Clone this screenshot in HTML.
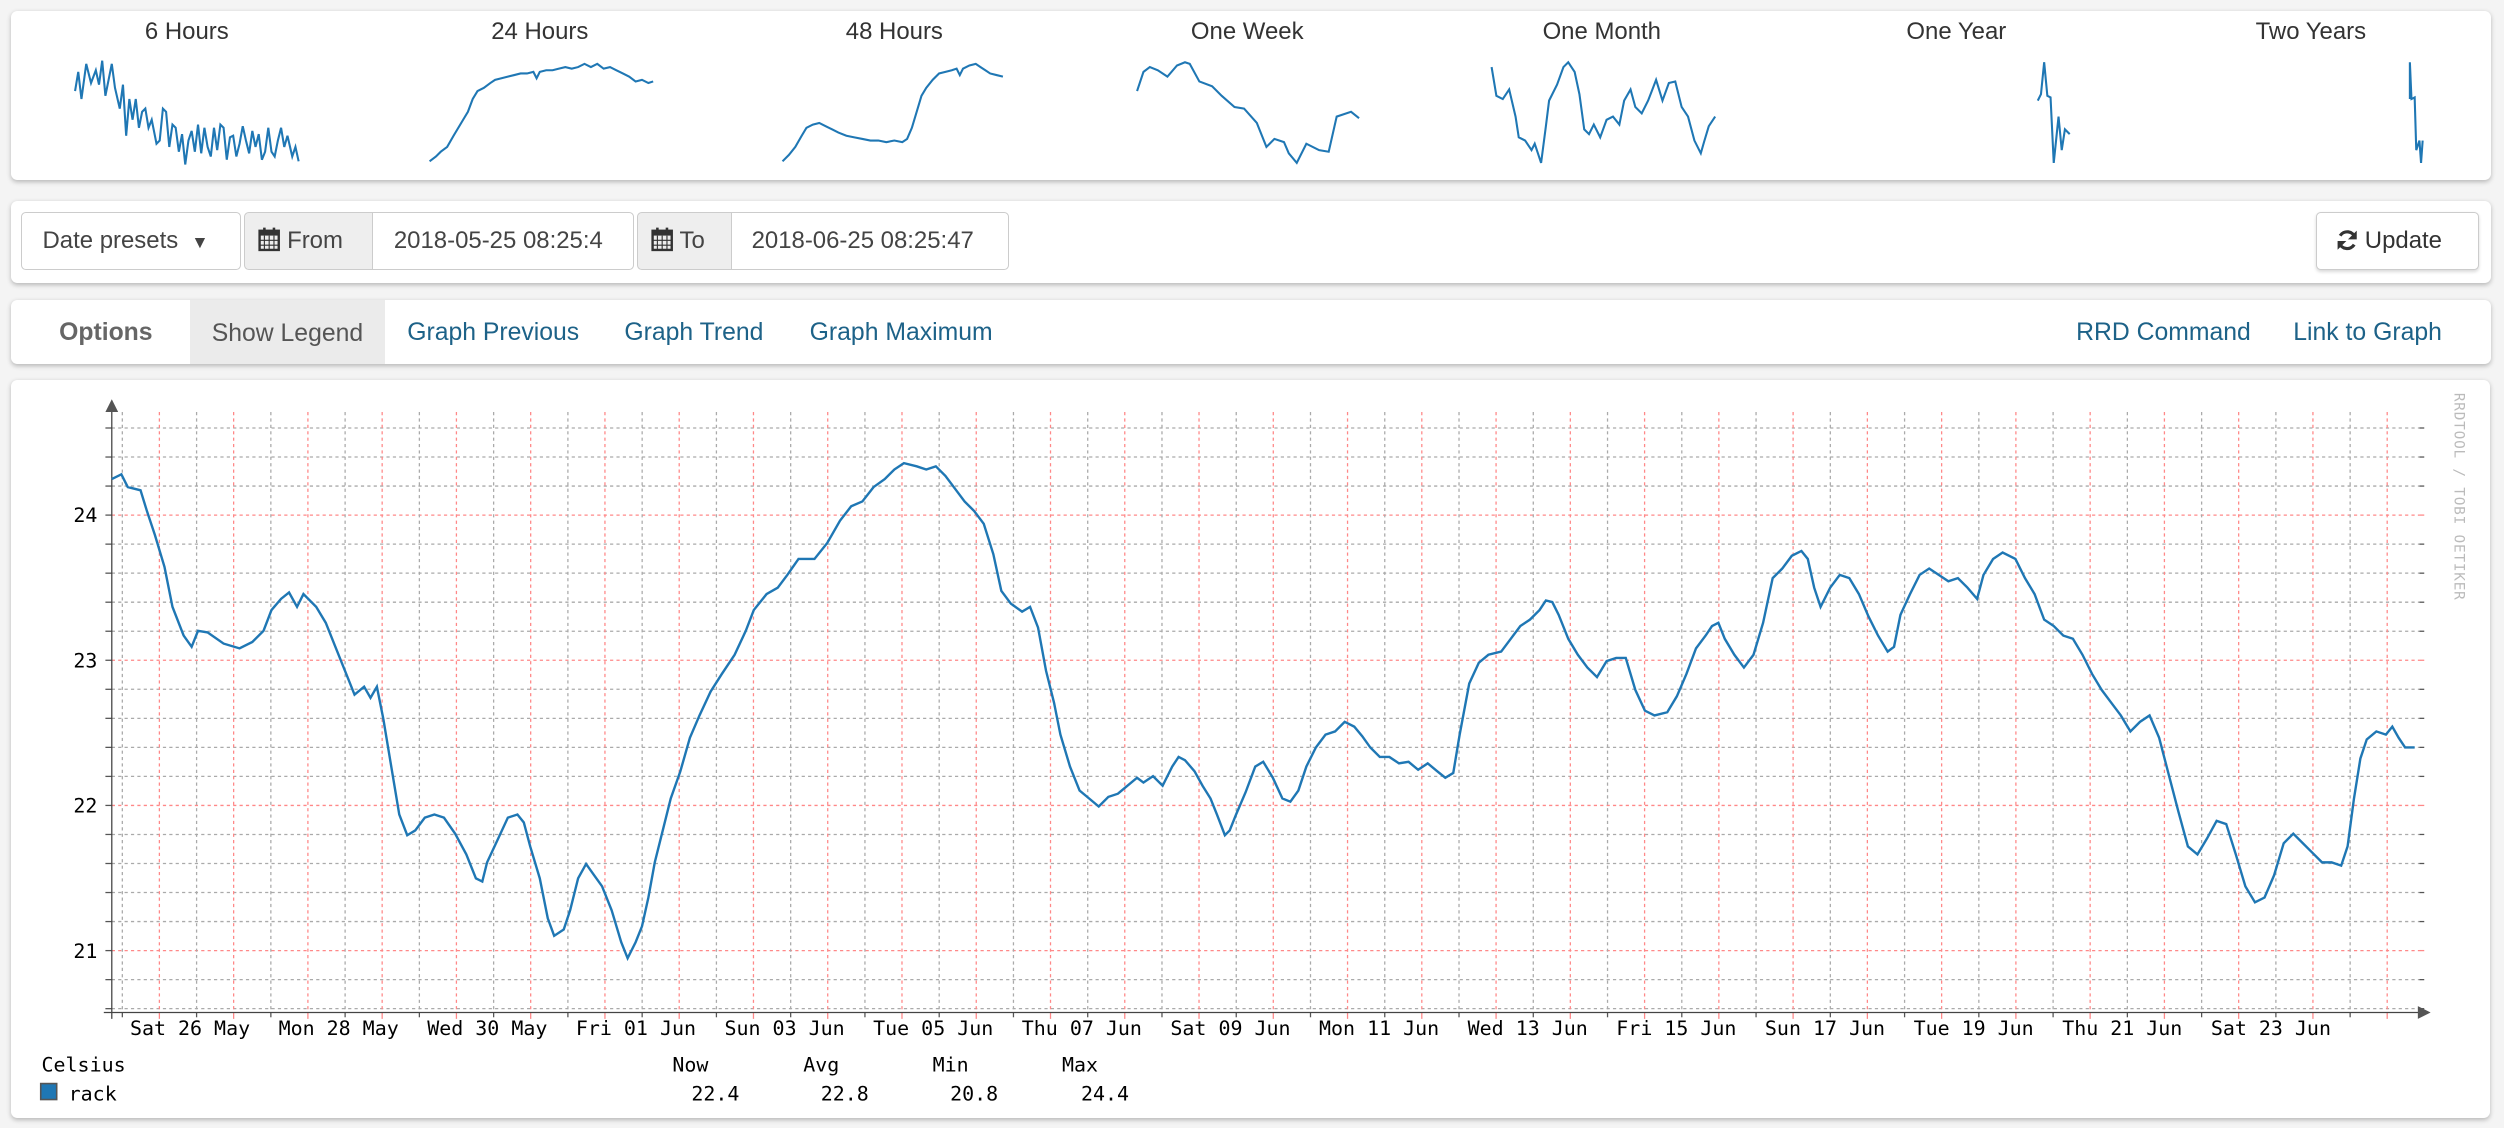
<!DOCTYPE html>
<html><head><meta charset="utf-8">
<style>
html,body{margin:0;padding:0;background:#f4f4f4;width:2504px;height:1128px;overflow:hidden}
#w{zoom:1.597;width:1568px;height:706px;position:relative;font-family:"Liberation Sans",sans-serif;color:#333}
.p{position:absolute;background:#fff;border-radius:4px;box-shadow:0 1px 3px rgba(0,0,0,.25)}
.t{position:absolute;top:4px;font-size:15px;text-align:center;width:200px;margin-left:-100px;color:#333}
.bx{position:absolute;top:7px;height:36px;border:1px solid #ccc;box-sizing:border-box;font-size:15px;line-height:35px;color:#444;background:#fff}
.ad{background:#eee}
.nav{position:absolute;top:1px;height:39px;line-height:39px;font-size:15.5px;color:#1d6288}
</style></head><body><div id="w">
<div class="p" style="left:7px;top:7px;width:1553px;height:106px">
<div class="t" style="left:110px">6 Hours</div>
<div class="t" style="left:331px">24 Hours</div>
<div class="t" style="left:553px">48 Hours</div>
<div class="t" style="left:774px">One Week</div>
<div class="t" style="left:996px">One Month</div>
<div class="t" style="left:1218px">One Year</div>
<div class="t" style="left:1440px">Two Years</div>
</div>
<svg style="position:absolute;left:0;top:0" width="1568" height="120">
<g fill="none" stroke="#1f77b4" stroke-width="1.3">
<polyline points="47,57 49,45 51,62 54,40 57,52 60,44 62,53 64,38 66,60 68,50 70,40 72,55 75,68 77,53 79,85 81,62 83,75 85,62 87,80 89,70 91,68 93,80 95,75 98,90 100,88 102,68 104,70 106,92 108,78 110,80 112,95 114,84 116,103 118,88 120,82 122,95 124,78 126,96 128,80 130,92 132,98 134,80 136,94 138,78 140,80 142,100 144,86 146,85 148,98 150,90 152,79 154,88 156,96 158,82 160,92 162,84 164,100 166,95 168,80 170,95 172,98 174,88 176,80 178,92 180,85 183,98 185,92 187,101"/>
<polyline points="269,101 273,98 276,95 280,92 284,85 287,80 290,75 293,70 296,62 299,57 303,55 307,52 310,50 314,49 318,48 322,47 326,46 330,46 334,45 336,49 338,45 342,44 346,44 350,43 354,42 358,43 362,42 366,40 370,42 374,40 378,43 382,42 386,44 390,46 394,48 398,51 402,50 406,52 409,51"/>
<polyline points="490,101 494,97 498,92 502,85 505,80 509,78 513,77 517,79 521,81 525,83 530,85 535,86 540,87 545,88 550,88 555,89 560,88 565,89 568,87 571,80 574,70 577,60 580,55 584,50 588,46 592,45 596,44 599,43 601,47 603,43 607,41 611,40 614,42 617,44 620,46 624,47 628,48"/>
<polyline points="712,57 716,45 720,42 725,44 731,48 737,41 742,39 745,40 751,51 759,54 765,60 773,67 779,68 787,77 793,92 798,87 804,89 807,96 812,102 818,90 826,94 832,95 837,73 846,70 851,74"/>
<polyline points="934,42 937,60 941,62 945,56 949,73 951,86 955,88 959,94 961,90 965,102 968,79 970,63 975,53 979,42 982,39 986,45 989,59 992,81 995,84 998,78 1002,86 1006,75 1010,73 1014,78 1017,63 1021,56 1024,67 1028,71 1032,63 1037,50 1041,63 1045,52 1049,51 1053,67 1057,73 1061,88 1065,96 1067,89 1070,79 1074,73"/>
<polyline points="1276,63 1278,59 1280,39 1282,60 1284,61 1286,102 1289,73 1291,94 1293,81 1296,84"/>
<polyline points="1509,62 1509,39 1510,62 1512,61 1513,94 1515,88 1516,102 1517,88"/>
</g></svg>

<div class="p" style="left:7px;top:126px;width:1553px;height:51px">
<div class="bx" style="left:6px;width:138px;border-radius:3px;padding-left:13px">Date presets <span style="font-size:11px;margin-left:4px">&#9660;</span></div>
<div class="bx ad" style="left:146px;width:81px;border-radius:3px 0 0 3px;padding-left:8px"><svg width="14" height="16" viewBox="0 0 14 16" style="vertical-align:-2px"><rect x="1" y="3" width="12" height="12" fill="none" stroke="#333" stroke-width="1.5"/><rect x="1" y="3" width="12" height="3" fill="#333"/><path d="M4 1v4M10 1v4" stroke="#333" stroke-width="1.6"/><path d="M1 9h12M1 12h12M4 6v9M7 6v9M10 6v9" stroke="#333" stroke-width=".7"/></svg> From</div>
<div class="bx" style="left:226px;width:164px;border-radius:0 3px 3px 0;padding-left:13px">2018-05-25 08:25:4</div>
<div class="bx ad" style="left:392px;width:60px;border-radius:3px 0 0 3px;padding-left:8px"><svg width="14" height="16" viewBox="0 0 14 16" style="vertical-align:-2px"><rect x="1" y="3" width="12" height="12" fill="none" stroke="#333" stroke-width="1.5"/><rect x="1" y="3" width="12" height="3" fill="#333"/><path d="M4 1v4M10 1v4" stroke="#333" stroke-width="1.6"/><path d="M1 9h12M1 12h12M4 6v9M7 6v9M10 6v9" stroke="#333" stroke-width=".7"/></svg> To</div>
<div class="bx" style="left:451px;width:174px;border-radius:0 3px 3px 0;padding-left:12px">2018-06-25 08:25:47</div>
<div class="bx" style="left:1443px;width:102px;border-radius:3px;padding-left:12px;color:#333;box-shadow:0 1px 2px rgba(0,0,0,.15)"><svg width="14" height="14" viewBox="0 0 14 14" style="vertical-align:-2px"><path d="M12 5.5A5.2 5.2 0 0 0 2.6 4.2M2 8.5a5.2 5.2 0 0 0 9.4 1.3" fill="none" stroke="#333" stroke-width="2"/><path d="M13 1v5.5H7.5zM1 13V7.5h5.5z" fill="#333"/></svg> Update</div>
</div>

<div class="p" style="left:7px;top:188px;width:1553px;height:40px">
<div class="nav" style="left:30px;color:#666;font-weight:bold">Options</div>
<div class="nav" style="left:112px;top:0;height:40px;line-height:42px;width:122px;background:#ebebeb;color:#555;text-align:center">Show Legend</div>
<div class="nav" style="left:248px">Graph Previous</div>
<div class="nav" style="left:384px">Graph Trend</div>
<div class="nav" style="left:500px">Graph Maximum</div>
<div class="nav" style="left:1293px">RRD Command</div>
<div class="nav" style="left:1429px">Link to Graph</div>
</div>

<div class="p" style="left:7px;top:238px;width:1552px;height:462px"></div>
<svg id="g" style="position:absolute;left:0;top:0" width="1568" height="706" font-family="DejaVu Sans Mono, Liberation Mono, monospace" font-size="12.5"></svg>
</div>
<script>
var g=document.getElementById('g'),s='';
function L(x1,y1,x2,y2,c,d){s+='<line x1="'+x1+'" y1="'+y1+'" x2="'+x2+'" y2="'+y2+'" stroke="'+c+'" stroke-width="0.8"'+(d?' stroke-dasharray="2,2"':'')+'/>';}
for(var i=0;i<=20;i++){var y=268+i*18.18;var red=(i%5==3);L(70,y,1515,y,red?'#f88':'#aaa',1);L(66,y,70,y,'#555');L(1515,y,1518,y,red?'#f88':'#555');}
for(var x=76.6;x<1515;x+=46.5){L(x,258,x,634,'#aaa',1);L(x,634,x,637,'#555');}
for(var x=99.8;x<1515;x+=46.5){L(x,258,x,634,'#f88',1);L(x,634,x,638,'#f88');}
L(70,254,70,638,'#444');L(65,634,1518,634,'#444');
s+='<path d="M66,258 L70,250 L74,258Z M1514,630 L1522,634 L1514,638Z" fill="#555"/>';
var yl=[[24,322.5],[23,413.5],[22,504.4],[21,595.3]];
yl.forEach(function(a){s+='<text x="61" y="'+(a[1]+4.5)+'" text-anchor="end">'+a[0]+'</text>';});
var lab=['Sat 26 May','Mon 28 May','Wed 30 May','Fri 01 Jun','Sun 03 Jun','Tue 05 Jun','Thu 07 Jun','Sat 09 Jun','Mon 11 Jun','Wed 13 Jun','Fri 15 Jun','Sun 17 Jun','Tue 19 Jun','Thu 21 Jun','Sat 23 Jun'];
lab.forEach(function(t,i){s+='<text x="'+(119+i*93.07)+'" y="648" text-anchor="middle">'+t+'</text>';});
var pts="70,300 76,297 80,305 88,307 92,320 97,335 103,355 108,380 115,398 120,405 124,395 130,396 140,403 150,406 158,402 165,395 170,382 176,375 181,371 186,380 190,372 198,380 204,390 210,405 218,425 222,435 228,430 232,437 236,430 240,450 245,480 250,510 255,523 260,520 266,512 272,510 278,512 285,522 292,535 298,550 302,552 305,540 312,525 318,512 324,510 328,515 332,530 338,550 343,575 347,586 353,582 357,570 362,550 367,541 372,548 377,555 383,570 389,590 393,600 398,590 402,580 406,562 410,540 415,520 420,500 426,483 432,462 438,448 445,433 452,422 460,410 467,395 472,382 480,372 487,368 493,360 500,350 510,350 518,340 526,326 533,317 540,314 547,305 554,300 560,294 566,290 574,292 580,294 586,292 592,298 598,306 604,314 610,320 616,328 622,347 627,370 633,378 640,383 645,380 650,393 655,420 660,440 664,460 670,480 676,495 682,500 688,505 694,499 700,497 706,492 712,487 716,490 722,486 728,492 734,480 738,474 742,476 748,483 753,492 758,500 762,510 767,523 770,520 774,510 780,496 786,480 791,477 797,487 803,500 808,502 813,495 818,480 824,468 830,460 836,458 842,452 848,455 853,461 858,468 864,474 870,474 876,478 882,477 888,482 894,478 900,483 905,487 910,484 914,460 920,428 926,415 932,410 940,408 946,400 952,392 958,388 964,382 968,376 972,377 976,385 982,400 988,410 994,418 1000,424 1006,414 1012,412 1018,412 1024,432 1030,445 1036,448 1044,446 1050,436 1056,422 1062,406 1068,398 1072,392 1076,390 1080,400 1086,410 1092,418 1098,410 1104,390 1110,362 1116,356 1122,348 1128,345 1132,350 1136,368 1140,380 1146,368 1152,360 1158,362 1164,372 1170,386 1176,398 1182,408 1186,405 1190,385 1196,372 1202,360 1208,356 1214,360 1220,364 1226,362 1232,368 1238,375 1242,360 1248,350 1254,346 1262,350 1268,362 1274,372 1280,388 1286,392 1292,398 1298,400 1304,410 1310,422 1316,432 1322,440 1328,448 1334,458 1340,452 1346,448 1352,462 1358,485 1364,508 1370,530 1376,535 1382,525 1388,514 1394,516 1400,535 1406,555 1412,565 1418,562 1424,548 1430,528 1436,522 1442,528 1448,534 1454,540 1460,540 1466,542 1470,530 1474,500 1478,475 1482,463 1488,458 1494,460 1498,455 1502,462 1506,468 1512,468";
s+='<polyline points="'+pts+'" fill="none" stroke="#1f77b4" stroke-width="1.5"/>';
s+='<text x="1537" y="246" font-size="9" fill="#bbb" transform="rotate(90 1537 246)" letter-spacing="0.5">RRDTOOL / TOBI OETIKER</text>';
s+='<text x="26" y="671">Celsius</text><rect x="25.5" y="678.5" width="10" height="10" fill="#1f77b4" stroke="#555" stroke-width="1"/><text x="43" y="689">rack</text>';
[['Now',421,'22.4',463],['Avg',503,'22.8',544],['Min',584,'20.8',625],['Max',665,'24.4',707]].forEach(function(a){s+='<text x="'+a[1]+'" y="671">'+a[0]+'</text><text x="'+a[3]+'" y="689" text-anchor="end">'+a[2]+'</text>';});
g.innerHTML=s;
</script>
</body></html>
